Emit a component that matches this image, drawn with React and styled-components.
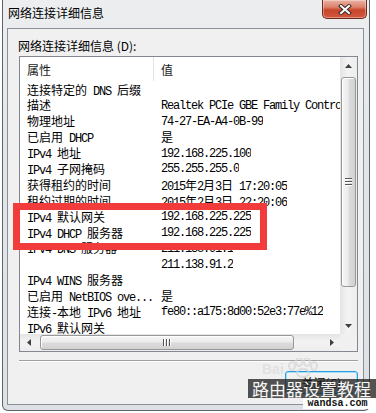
import React from 'react';
import styled, { createGlobalStyle } from 'styled-components';

const GlobalStyle = createGlobalStyle`
  html, body {
    margin: 0;
    padding: 0;
    background: #fff;
  }
  body {
    font-family: "Noto Sans CJK SC", "Noto Sans", sans-serif;
    color: #000;
  }
`;

const rows = [
  ['连接特定的 DNS 后缀', ''],
  ['描述', 'Realtek PCIe GBE Family Controller'],
  ['物理地址', '74-27-EA-A4-0B-99'],
  ['已启用 DHCP', '是'],
  ['IPv4 地址', '192.168.225.100'],
  ['IPv4 子网掩码', '255.255.255.0'],
  ['获得租约的时间', '2015年2月3日 17:20:05'],
  ['租约过期的时间', '2015年2月3日 22:20:06'],
  ['IPv4 默认网关', '192.168.225.225'],
  ['IPv4 DHCP 服务器', '192.168.225.225'],
  ['IPv4 DNS 服务器', '211.138.91.1'],
  ['', '211.138.91.2'],
  ['IPv4 WINS 服务器', ''],
  ['已启用 NetBIOS ove...', '是'],
  ['连接-本地 IPv6 地址', 'fe80::a175:8d00:52e3:77e%12'],
  ['IPv6 默认网关', ''],
];

// split latin / han runs so each gets the right advance width
const HAN = /([\u3000-\u30ff\u4e00-\u9fff\uff00-\uffef]+)/;
const mixed = (text) =>
  text.split(HAN).map((part, i) =>
    part === '' ? null : HAN.test(part) ? <Han key={i}>{part}</Han> : <span key={i}>{part}</span>
  );

const Arrow = ({ dir }) => {
  const vertical = dir === 'up' || dir === 'down';
  const points = {
    up: '0,4 3.5,0 7,4',
    down: '0,0 3.5,4 7,0',
    left: '4,0 0,3.5 4,7',
    right: '0,0 4,3.5 0,7',
  }[dir];
  return (
    <svg width={vertical ? 7 : 4} height={vertical ? 4 : 7} viewBox={vertical ? '0 0 7 4' : '0 0 4 7'}>
      <polygon points={points} fill="#404040" />
    </svg>
  );
};

const Grip = ({ vertical }) => (
  <svg width={vertical ? 7 : 8} height={vertical ? 8 : 7} viewBox={vertical ? '0 0 7 8' : '0 0 8 7'}>
    {[0, 3, 6].map((p) =>
      vertical ? (
        <g key={p}>
          <rect x="0" y={p} width="7" height="1" fill="#555" />
          <rect x="0" y={p + 1} width="7" height="1" fill="#fff" />
        </g>
      ) : (
        <g key={p}>
          <rect x={p} y="0" width="1" height="7" fill="#555" />
          <rect x={p + 1} y="0" width="1" height="7" fill="#fff" />
        </g>
      )
    )}
  </svg>
);

const CloseGlyph = () => (
  <svg width="14" height="11" viewBox="0 0 14 11">
    <path d="M3 2 L11 9 M11 2 L3 9" stroke="#3b2a28" strokeWidth="4" strokeLinecap="square" />
    <path d="M3 2 L11 9 M11 2 L3 9" stroke="#fff" strokeWidth="2" strokeLinecap="square" />
  </svg>
);

const App = () => {
  return (
    <Stage>
      <GlobalStyle />
      <Window>
        <TitleBar>
          <Title>网络连接详细信息</Title>
          <CloseButton>
            <CloseGlyph />
          </CloseButton>
        </TitleBar>
        <Client>
          <Label>网络连接详细信息 (D):</Label>
          <ListView>
            <Content>
              <Header>
                <HeaderCell $divider>属性</HeaderCell>
                <HeaderCell>值</HeaderCell>
              </Header>
              <Rows>
                {rows.map(([name, value], i) => (
                  <Row key={i}>
                    <Cell>{mixed(name)}</Cell>
                    <Cell>{mixed(value)}</Cell>
                  </Row>
                ))}
              </Rows>
            </Content>
            <VScroll>
              <ScrollButton>
                <Arrow dir="up" />
              </ScrollButton>
              <VTrack>
                <VThumb>
                  <Grip vertical />
                </VThumb>
              </VTrack>
              <ScrollButton>
                <Arrow dir="down" />
              </ScrollButton>
            </VScroll>
            <HScroll>
              <ScrollButton>
                <Arrow dir="left" />
              </ScrollButton>
              <HTrack>
                <HThumb>
                  <Grip />
                </HThumb>
              </HTrack>
              <ScrollButton>
                <Arrow dir="right" />
              </ScrollButton>
            </HScroll>
            <Corner />
          </ListView>
          <Separator />
          <ButtonRow>
            <PushButton>关闭(C)</PushButton>
          </ButtonRow>
        </Client>
      </Window>

      <Highlight />

      <BaiduMark>
        <span>Bai</span>
        <svg width="34" height="20" viewBox="0 0 34 20">
          <ellipse cx="6" cy="8" rx="3" ry="4" fill="none" stroke="#d6d6d6" strokeWidth="2" />
          <ellipse cx="13" cy="4" rx="3" ry="4" fill="none" stroke="#d6d6d6" strokeWidth="2" />
          <ellipse cx="21" cy="4" rx="3" ry="4" fill="none" stroke="#d6d6d6" strokeWidth="2" />
          <ellipse cx="28" cy="8" rx="3" ry="4" fill="none" stroke="#d6d6d6" strokeWidth="2" />
          <ellipse cx="17" cy="15" rx="6" ry="4" fill="none" stroke="#d6d6d6" strokeWidth="2" />
        </svg>
      </BaiduMark>

      <Watermark>
        <WatermarkBand>路由器设置教程</WatermarkBand>
        <WatermarkSite>wandsa.com</WatermarkSite>
      </Watermark>
    </Stage>
  );
};

export default App;

const Stage = styled.div`
  position: relative;
  width: 376px;
  height: 413px;
  overflow: hidden;
  background: #fff;
`;

const Window = styled.div`
  margin-left: 2px;
  width: 368px;
  box-sizing: border-box;
  display: flex;
  flex-direction: column;
  padding: 0 5px 5px 4px;
  border: 1px solid #5d636b;
  border-top: none;
  border-radius: 0 0 6px 6px;
  background: linear-gradient(180deg, #eceef0 0%, #e2e5e8 40%, #dde1e5 100%);
`;

const TitleBar = styled.div`
  height: 28px;
  display: flex;
  justify-content: space-between;
  align-items: flex-start;
  margin-right: -3px;
`;

const Title = styled.div`
  margin-top: 5px;
  padding-left: 1px;
  font-size: 12px;
  line-height: 16px;
  color: #000;
`;

const CloseButton = styled.div`
  width: 45px;
  height: 19px;
  box-sizing: border-box;
  display: flex;
  align-items: center;
  justify-content: center;
  border: 1px solid #6e2a1e;
  border-top: none;
  border-radius: 0 0 5px 5px;
  background: linear-gradient(180deg, #eab2a4 0%, #dc806a 40%, #c8452c 55%, #d1583c 100%);
  box-shadow: inset 0 0 0 1px rgba(255, 255, 255, 0.35);
`;

const Client = styled.div`
  display: flex;
  flex-direction: column;
  padding: 9px 5px 10px 10px;
  border: 1px solid #8a9097;
  background: #f0f0f0;
`;

const Label = styled.div`
  font-size: 12px;
  line-height: 16px;
`;

const ListView = styled.div`
  margin: 2px 0 0 1px;
  height: 296px;
  box-sizing: border-box;
  display: grid;
  grid-template-columns: 1fr 17px;
  grid-template-rows: 1fr 17px;
  border: 1px solid #828790;
  background: #fff;
`;

const Content = styled.div`
  min-width: 0;
  overflow: hidden;
`;

const Header = styled.div`
  display: grid;
  grid-template-columns: 134px 1fr;
  height: 24px;
  background: #fff;
`;

const HeaderCell = styled.div`
  padding: 2px 0 0 7px;
  font-size: 12px;
  line-height: 22px;
  color: #1a1a1a;
  border-right: ${(p) => (p.$divider ? '1px solid #e2e4e8' : 'none')};
`;

const Rows = styled.div`
  padding-top: 2px;
`;

const Row = styled.div`
  display: grid;
  grid-template-columns: 134px max-content;
  height: 15.9px;
  align-items: center;
  white-space: nowrap;
`;

const Cell = styled.div`
  padding-left: 7px;
  overflow: hidden;
  font-family: "Liberation Mono", monospace;
  font-size: 12px;
  letter-spacing: -1.2px;
  line-height: 15.9px;
  color: #000;
`;

const Han = styled.span`
  font-family: "Noto Sans CJK SC", sans-serif;
  font-size: 12px;
  letter-spacing: 0;
`;

const VScroll = styled.div`
  display: flex;
  flex-direction: column;
  background: linear-gradient(90deg, #e4e4e4 0%, #f3f3f3 45%, #ededed 100%);
`;

const HScroll = styled.div`
  display: flex;
  background: linear-gradient(180deg, #e4e4e4 0%, #f3f3f3 45%, #ededed 100%);
`;

const ScrollButton = styled.div`
  flex: 0 0 17px;
  width: 17px;
  height: 17px;
  display: flex;
  align-items: center;
  justify-content: center;
`;

const VTrack = styled.div`
  flex: 1;
  display: flex;
  flex-direction: column;
`;

const HTrack = styled.div`
  flex: 1;
  display: flex;
`;

const VThumb = styled.div`
  margin: 3px 1px 0 1px;
  height: 210px;
  box-sizing: border-box;
  display: flex;
  align-items: center;
  justify-content: center;
  border: 1px solid #979797;
  border-radius: 3px;
  background: linear-gradient(90deg, #f6f6f6 0%, #ececec 45%, #dcdcdc 55%, #d2d2d2 100%);
  box-shadow: inset 1px 1px 0 #fff;
`;

const HThumb = styled.div`
  margin: 1px 0 1px 3px;
  width: 254px;
  box-sizing: border-box;
  display: flex;
  align-items: center;
  justify-content: center;
  border: 1px solid #979797;
  border-radius: 3px;
  background: linear-gradient(180deg, #f6f6f6 0%, #ececec 45%, #dcdcdc 55%, #d2d2d2 100%);
  box-shadow: inset 1px 1px 0 #fff;
`;

const Corner = styled.div`
  background: #f0f0f0;
`;

const Separator = styled.div`
  margin: 8px 0 0 1px;
  border-top: 1px solid #a0a0a0;
  border-bottom: 1px solid #fff;
`;

const ButtonRow = styled.div`
  display: flex;
  justify-content: flex-end;
  margin-top: 9px;
`;

const PushButton = styled.div`
  width: 73px;
  height: 23px;
  box-sizing: border-box;
  display: flex;
  align-items: center;
  justify-content: center;
  font-size: 12px;
  border: 1px solid #3399dd;
  border-radius: 3px;
  background: linear-gradient(180deg, #f4f4f4 0%, #ececec 50%, #dedede 51%, #d2d2d2 100%);
  box-shadow: inset 0 0 0 1px #9fe2fb;
`;

const Highlight = styled.div`
  position: absolute;
  left: 13px;
  top: 203px;
  width: 254px;
  height: 47px;
  box-sizing: border-box;
  border: 7px solid #f23c3c;
`;

const BaiduMark = styled.div`
  position: absolute;
  left: 262px;
  top: 358px;
  display: flex;
  align-items: flex-end;
  gap: 2px;
  opacity: 0.7;

  span {
    font-family: "Liberation Sans", sans-serif;
    font-weight: bold;
    font-size: 14px;
    line-height: 18px;
    color: #dcdcdc;
  }
`;

const Watermark = styled.div`
  position: absolute;
  left: 248px;
  top: 379px;
  width: 128px;
  display: flex;
  flex-direction: column;
  align-items: flex-end;
`;

const WatermarkBand = styled.div`
  width: 128px;
  height: 19px;
  box-sizing: border-box;
  padding-left: 4px;
  font-size: 17px;
  line-height: 19px;
  color: #f6f6f6;
  background: rgba(34, 34, 34, 0.78);
  white-space: nowrap;
`;

const WatermarkSite = styled.div`
  margin-right: 4px;
  width: 69px;
  height: 11px;
  font-family: "Liberation Mono", monospace;
  font-size: 10px;
  font-weight: bold;
  line-height: 11px;
  text-align: center;
  color: #111;
  background: #fff;
`;
